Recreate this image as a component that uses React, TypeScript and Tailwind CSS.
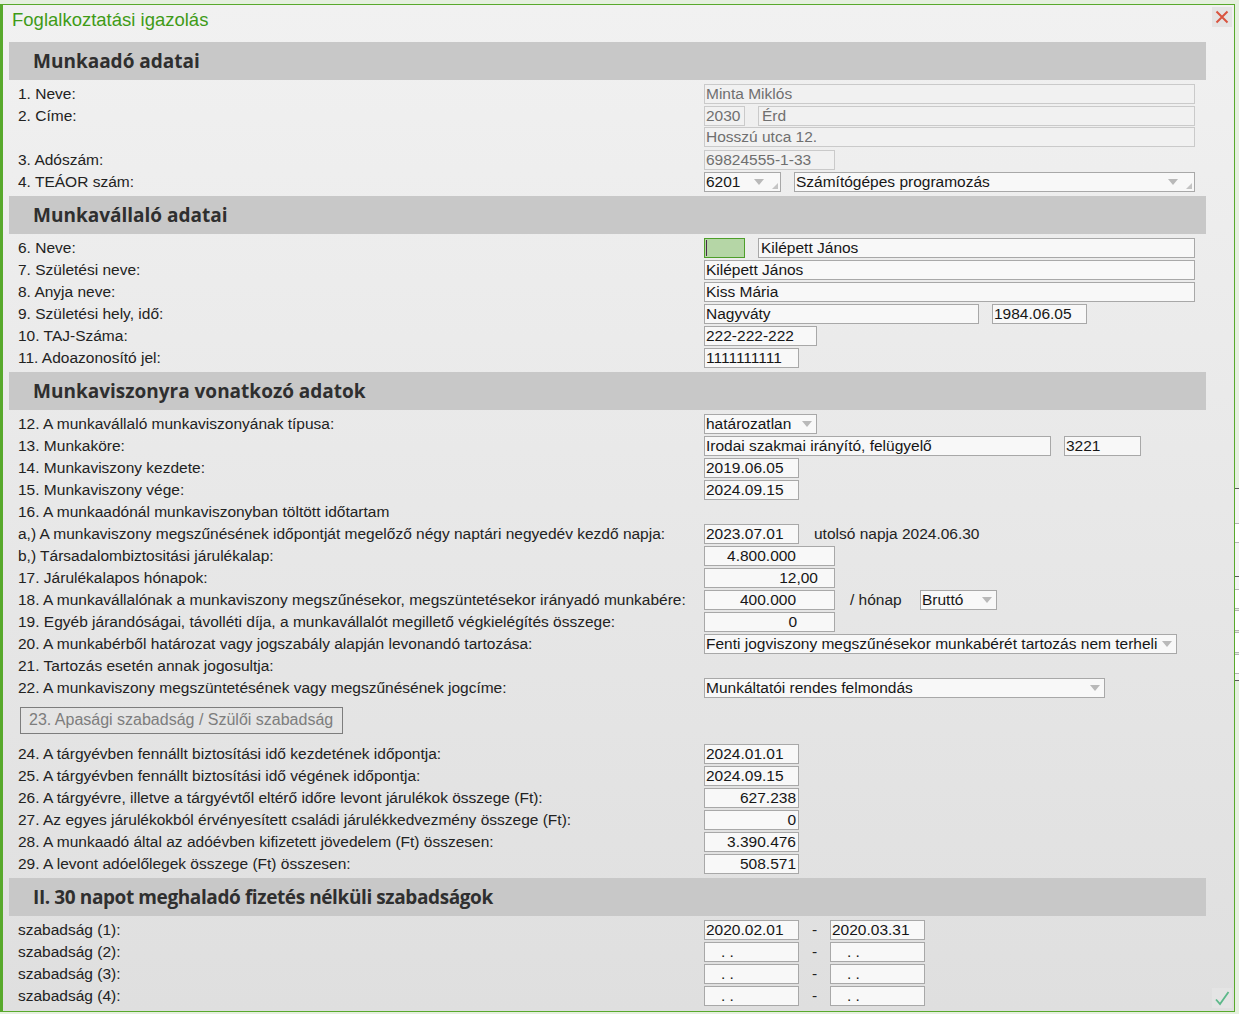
import React from "react";

const SANS = "font-['Liberation_Sans',Arial,sans-serif]";

type FieldProps = {
  className?: string;
  children?: React.ReactNode;
  disabled?: boolean;
  select?: boolean;
  grip?: boolean;
};

function Field({ className = "", children, disabled, select, grip }: FieldProps) {
  return (
    <div
      className={`relative h-5 shrink-0 overflow-hidden whitespace-nowrap border px-px text-[15.5px] leading-[18px] ${
        disabled
          ? "border-[#cacaca] bg-[#f1f1f1] text-[#6f6f6f]"
          : "border-[#a8a8a8] bg-[#f8f8f8] text-[#161616]"
      } ${className}`}
    >
      {children}
      {select && (
        <svg
          width="10"
          height="6"
          viewBox="0 0 10 6"
          className={`absolute top-[6px] ${grip ? "right-[16px]" : "right-[4px]"}`}
        >
          <path d="M0 0h10L5 6z" fill="#b9b9b9" />
        </svg>
      )}
      {grip && (
        <svg width="6" height="6" viewBox="0 0 6 6" className="absolute bottom-[2px] right-[2px]">
          <path d="M6 0v6H0z" fill="#c4c4c4" />
        </svg>
      )}
    </div>
  );
}

function Row({ label, children }: { label?: string; children?: React.ReactNode }) {
  return (
    <div className="grid h-[22px] grid-cols-[695px_1fr] items-center">
      <div className="whitespace-nowrap pl-[9px] text-[15.5px] text-[#222]">{label}</div>
      <div className="flex items-center">{children}</div>
    </div>
  );
}

function Section({ title, className = "" }: { title: string; className?: string }) {
  return (
    <div
      className={`mb-[2px] mt-1 flex h-[38px] items-center bg-[#c8c8c8] pl-[24px] font-['Open_Sans',sans-serif] text-[19px] font-bold text-[#2f2f2f] ${className}`}
    >
      {title}
    </div>
  );
}

function Empty() {
  return <Field className="w-[95px] pl-[16px]">. .</Field>;
}

function Dash() {
  return <span className="w-[31px] shrink-0 text-center text-[15.5px] text-[#222]">-</span>;
}

export default function App() {
  return (
    <div className={`flex h-[1014px] w-[1239px] overflow-hidden bg-[#e5f0df] ${SANS}`}>
      <div className="relative mt-1 h-[1008px] w-[1235px] shrink-0 border border-l-[3px] border-[#58a92c] bg-linear-to-b from-[#f1f1f1] to-[#dfdfdf]">
        <div className="h-[33px] pl-[9px] pt-[4px] text-[18.5px] leading-[21px] text-[#3f9b17]">
          Foglalkoztatási igazolás
        </div>

        <button className="absolute right-[2px] top-[2px] flex h-5 w-5 items-center justify-center bg-[#e4e4e4]">
          <svg width="14" height="14" viewBox="0 0 14 14">
            <path d="M1.5 1.5l11 11M12.5 1.5l-11 11" stroke="#d9543f" strokeWidth="2" />
          </svg>
        </button>

        <div className="pl-[6px] pr-[28px]">
          <Section title="Munkaadó adatai" />
          <Row label="1. Neve:">
            <Field disabled className="w-[491px]">Minta Miklós</Field>
          </Row>
          <Row label="2. Címe:">
            <Field disabled className="w-[41px]">2030</Field>
            <Field disabled className="ml-[13px] w-[437px] pl-[3px]">Érd</Field>
          </Row>
          <Row>
            <Field disabled className="w-[491px]">Hosszú utca 12.</Field>
          </Row>
          <Row label="3. Adószám:">
            <Field disabled className="w-[131px]">69824555-1-33</Field>
          </Row>
          <Row label="4. TEÁOR szám:">
            <Field className="w-[77px]" select grip>6201</Field>
            <Field className="ml-[13px] w-[401px]" select grip>Számítógépes programozás</Field>
          </Row>

          <Section title="Munkavállaló adatai" />
          <Row label="6. Neve:">
            <div className="relative h-5 w-[41px] shrink-0 border border-[#4e9e2a] bg-[#b5d6a6]">
              <div className="absolute left-px top-[1px] h-4 w-px bg-[#4b2d4b]" />
            </div>
            <Field className="ml-[13px] w-[437px] pl-[2px]">Kilépett János</Field>
          </Row>
          <Row label="7. Születési neve:">
            <Field className="w-[491px]">Kilépett János</Field>
          </Row>
          <Row label="8. Anyja neve:">
            <Field className="w-[491px]">Kiss Mária</Field>
          </Row>
          <Row label="9. Születési hely, idő:">
            <Field className="w-[275px]">Nagyváty</Field>
            <Field className="ml-[13px] w-[95px]">1984.06.05</Field>
          </Row>
          <Row label="10. TAJ-Száma:">
            <Field className="w-[113px]">222-222-222</Field>
          </Row>
          <Row label="11. Adoazonosító jel:">
            <Field className="w-[95px]">1111111111</Field>
          </Row>

          <Section title="Munkaviszonyra vonatkozó adatok" />
          <Row label="12. A munkavállaló munkaviszonyának típusa:">
            <Field className="w-[113px]" select>határozatlan</Field>
          </Row>
          <Row label="13. Munkaköre:">
            <Field className="w-[347px]">Irodai szakmai irányító, felügyelő</Field>
            <Field className="ml-[13px] w-[77px]">3221</Field>
          </Row>
          <Row label="14. Munkaviszony kezdete:">
            <Field className="w-[95px]">2019.06.05</Field>
          </Row>
          <Row label="15. Munkaviszony vége:">
            <Field className="w-[95px]">2024.09.15</Field>
          </Row>
          <Row label="16. A munkaadónál munkaviszonyban töltött időtartam" />
          <Row label="a,) A munkaviszony megszűnésének időpontját megelőző négy naptári negyedév kezdő napja:">
            <Field className="w-[95px]">2023.07.01</Field>
            <span className="ml-[15px] text-[15.5px] text-[#222]">utolsó napja 2024.06.30</span>
          </Row>
          <Row label="b,) Társadalombiztositási járulékalap:">
            <Field className="w-[131px] pr-[38px] text-right">4.800.000</Field>
          </Row>
          <Row label="17. Járulékalapos hónapok:">
            <Field className="w-[131px] pr-[16px] text-right">12,00</Field>
          </Row>
          <Row label="18. A munkavállalónak a munkaviszony megszűnésekor, megszüntetésekor irányadó munkabére:">
            <Field className="w-[131px] pr-[38px] text-right">400.000</Field>
            <span className="ml-[15px] w-[70px] shrink-0 text-[15.5px] text-[#222]">/ hónap</span>
            <Field className="w-[77px]" select>Bruttó</Field>
          </Row>
          <Row label="19. Egyéb járandóságai, távolléti díja, a munkavállalót megillető végkielégítés összege:">
            <Field className="w-[131px] pr-[37px] text-right">0</Field>
          </Row>
          <Row label="20. A munkabérből határozat vagy jogszabály alapján levonandó tartozása:">
            <Field className="w-[473px]" select>Fenti jogviszony megszűnésekor munkabérét tartozás nem terheli</Field>
          </Row>
          <Row label="21. Tartozás esetén annak jogosultja:" />
          <Row label="22. A munkaviszony megszüntetésének vagy megszűnésének jogcíme:">
            <Field className="w-[401px]" select>Munkáltatói rendes felmondás</Field>
          </Row>

          <div className="flex h-[44px] items-center pl-[11px]">
            <button className="h-[27px] w-[323px] border border-[#7d7d7d] pl-[8px] text-left text-[16px] text-[#7d7d7d]">
              23. Apasági szabadság / Szülői szabadság
            </button>
          </div>

          <Row label="24. A tárgyévben fennállt biztosítási idő kezdetének időpontja:">
            <Field className="w-[95px]">2024.01.01</Field>
          </Row>
          <Row label="25. A tárgyévben fennállt biztosítási idő végének időpontja:">
            <Field className="w-[95px]">2024.09.15</Field>
          </Row>
          <Row label="26. A tárgyévre, illetve a tárgyévtől eltérő időre levont járulékok összege (Ft):">
            <Field className="w-[95px] pr-[2px] text-right">627.238</Field>
          </Row>
          <Row label="27. Az egyes járulékokból érvényesített családi járulékkedvezmény összege (Ft):">
            <Field className="w-[95px] pr-[2px] text-right">0</Field>
          </Row>
          <Row label="28. A munkaadó által az adóévben kifizetett jövedelem (Ft) összesen:">
            <Field className="w-[95px] pr-[2px] text-right">3.390.476</Field>
          </Row>
          <Row label="29. A levont adóelőlegek összege (Ft) összesen:">
            <Field className="w-[95px] pr-[2px] text-right">508.571</Field>
          </Row>

          <Section
            title="II. 30 napot meghaladó fizetés nélküli szabadságok"
            className="pl-[21px] tracking-[-0.4px]"
          />
          <Row label="szabadság (1):">
            <Field className="w-[95px]">2020.02.01</Field>
            <Dash />
            <Field className="w-[95px]">2020.03.31</Field>
          </Row>
          <Row label="szabadság (2):">
            <Empty />
            <Dash />
            <Empty />
          </Row>
          <Row label="szabadság (3):">
            <Empty />
            <Dash />
            <Empty />
          </Row>
          <Row label="szabadság (4):">
            <Empty />
            <Dash />
            <Empty />
          </Row>
        </div>

        <button className="absolute bottom-[3px] right-[2px] flex h-5 w-5 items-center justify-center bg-[#e4e4e4]">
          <svg width="16" height="16" viewBox="0 0 16 16">
            <path d="M2 9.5l4 4.5L14.5 2" fill="none" stroke="#5cb889" strokeWidth="1.8" />
          </svg>
        </button>
      </div>

      {/* a piece of the window behind */}
      <div className="flex w-[4px] shrink-0 flex-col">
        <div className="h-[488px]" />
        <div className="h-px bg-[#5a5a5a]" />
        <div className="h-[34px] bg-[#f4f4f4]" />
        <div className="h-px bg-[#b4b4b4]" />
        <div className="h-[18px] bg-white" />
        <div className="h-px bg-[#b4b4b4]" />
        <div className="h-[33px] bg-[#f4f4f4]" />
        <div className="h-px bg-[#5a5a5a]" />
        <div className="h-[12px] bg-[#f4f4f4]" />
        <div className="h-px bg-[#b4b4b4]" />
        <div className="h-[18px] bg-white" />
        <div className="h-[3px] border-y border-[#b4b4b4]" />
        <div className="h-[19px] bg-white" />
        <div className="h-[3px] border-y border-[#b4b4b4]" />
        <div className="h-[19px] bg-white" />
        <div className="h-[3px] border-y border-[#b4b4b4]" />
        <div className="h-[18px] bg-white" />
        <div className="h-px bg-[#b4b4b4]" />
        <div className="h-[6px] bg-[#f4f4f4]" />
        <div className="h-px bg-[#5a5a5a]" />
      </div>
    </div>
  );
}
